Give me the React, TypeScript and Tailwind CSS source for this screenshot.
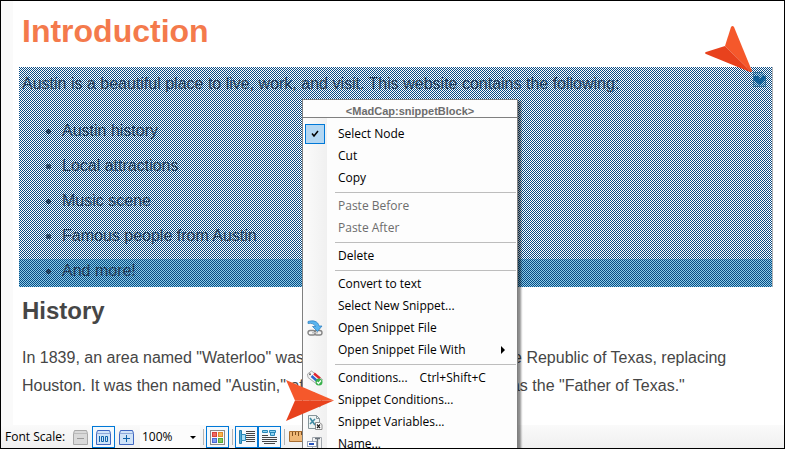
import React from "react";

const TOPICS = ["Austin history", "Local attractions", "Music scene", "Famous people from Austin", "And more!"];

function OpenLinkIcon() {
  return (
    <svg width="16" height="16" viewBox="0 0 16 16" fill="none" aria-hidden="true">
      <rect x="1" y="10.5" width="7.500" height="4.500" rx="2.200" stroke="#858585" strokeWidth="1.400" />
      <rect x="7.500" y="10.500" width="7.500" height="4.500" rx="2.200" stroke="#858585" strokeWidth="1.400" />
      <path d="M5 12.700h6" stroke="#c0c0c0" strokeWidth="1.400" />
      <path d="M1 1.500C6 0 11 1 12 6h3L10.500 11.500 5.500 6.500H8.500C7.500 4 4.500 2.800 1 3.500Z" fill="#58b4ee" stroke="#2679bd" strokeWidth=".7" />
    </svg>
  );
}

function ConditionsIcon() {
  return (
    <svg width="16" height="16" viewBox="0 0 16 16" aria-hidden="true">
      <path d="M.500 4 4.500 1l11 8.500-4.500 5.500L1 7.500Z" fill="#f5f5f5" stroke="#999" strokeWidth=".8" />
      <path d="M7 3.500 13 8.500" stroke="#e02632" strokeWidth="2.400" />
      <path d="M4.500 6 9.500 10.500" stroke="#2b67cd" strokeWidth="2.400" />
      <circle cx="3" cy="4.200" r="1" fill="#666" />
      <circle cx="12" cy="12" r="3.500" fill="#38b24b" />
      <path d="m10 12 1.500 1.500 2.500-3" fill="none" stroke="#fff" strokeWidth="1.200" />
    </svg>
  );
}

function SnippetTagIcon() {
  return (
    <svg width="16" height="16" viewBox="0 0 16 16" aria-hidden="true">
      <path d="M1 4 4 1h4l7 7-5 6L1 7Z" fill="#f2f2f2" stroke="#9a9a9a" />
      <path d="m8 13 5 2 1-4" fill="none" stroke="#999" />
    </svg>
  );
}

function VariablesIcon() {
  return (
    <svg width="16" height="16" viewBox="0 0 16 16" aria-hidden="true">
      <path d="M1.500 1.500h8l3 3v10h-11Z" fill="#eef4f4" stroke="#86959a" />
      <path d="M9.500 1.500v3h3" fill="none" stroke="#86959a" />
      <path d="m3 4 5 7M8 5 3 10" stroke="#428ba3" strokeWidth="1.600" />
      <path d="M8.500 8.500h4l2.500 2v5H8.500Z" fill="#fff" stroke="#8b8b8b" />
      <path d="m10 10.500 3 3.500m0-3.500L10 14" stroke="#222" strokeWidth="1.200" />
    </svg>
  );
}

function NameIcon() {
  return (
    <svg width="16" height="16" viewBox="0 0 16 16" aria-hidden="true">
      <path d="M5.500 1.500h9v13h-9Z" fill="#f4f4f4" stroke="#a2a8ae" />
      <rect x=".5" y="5.500" width="9" height="5" fill="#fff" stroke="#9aa5b8" />
      <rect x="2" y="7" width="5" height="2" fill="#2854bd" />
      <path d="M8 2.500h5M10.500 2.500v11M8 13.500h5" stroke="#69727b" strokeWidth="1.300" />
    </svg>
  );
}

type Entry = { label: string; icon?: React.ReactNode; disabled?: boolean; checked?: boolean; submenu?: boolean; keys?: string };

const GROUPS: Entry[][] = [
  [{ label: "Select Node", checked: true }, { label: "Cut" }, { label: "Copy" }],
  [{ label: "Paste Before", disabled: true }, { label: "Paste After", disabled: true }],
  [{ label: "Delete" }],
  [
    { label: "Convert to text" },
    { label: "Select New Snippet..." },
    { label: "Open Snippet File", icon: <OpenLinkIcon /> },
    { label: "Open Snippet File With", submenu: true },
  ],
  [
    { label: "Conditions...", icon: <ConditionsIcon />, keys: "Ctrl+Shift+C" },
    { label: "Snippet Conditions...", icon: <SnippetTagIcon /> },
    { label: "Snippet Variables...", icon: <VariablesIcon /> },
    { label: "Name...", icon: <NameIcon /> },
  ],
];

function MenuRow({ entry }: { entry: Entry }) {
  return (
    <button
      type="button"
      role={entry.checked ? "menuitemcheckbox" : "menuitem"}
      aria-checked={entry.checked}
      disabled={entry.disabled}
      className="flex h-[22px] w-full items-center text-left text-black disabled:text-[#6d6d6d]"
    >
      <span className="flex w-6 shrink-0 justify-center">
        {entry.checked ? (
          <span className="flex h-5 w-5 items-center justify-center border border-[#0078d7] bg-[#b3d7f3]">
            <svg width="8" height="8" viewBox="0 0 8 8" aria-hidden="true">
              <path d="m1 3.500 2 2.500L7 1" fill="none" stroke="#000" strokeWidth="1.500" />
            </svg>
          </span>
        ) : (
          entry.icon
        )}
      </span>
      <span className="pl-[11px]">{entry.label}</span>
      {entry.keys && <span className="pl-3">{entry.keys}</span>}
      {entry.submenu && (
        <svg className="mr-3 ml-auto" width="4" height="8" viewBox="0 0 4 8" aria-hidden="true">
          <path d="M0 0v8l4-4Z" />
        </svg>
      )}
    </button>
  );
}

function ContextMenu() {
  return (
    <div
      role="menu"
      aria-label="Snippet block"
      className="absolute top-[98px] left-[301px] w-[216px] border border-[#808080] bg-[#fdfdfd] font-['Open_Sans',sans-serif] text-[12px] leading-4 shadow-[3px_2px_2px_rgba(0,0,0,0.45)]"
    >
      <div className="flex h-[18px] items-center justify-center border-b border-[#808080] pt-1 font-['Liberation_Sans',sans-serif] text-[11px] font-bold text-[#6d6d6d]">
        &lt;MadCap:snippetBlock&gt;
      </div>
      <div className="bg-linear-to-r from-[#fbfbfb] from-0% via-[#f0f0f0] via-[24px] to-[#fdfdfd] to-[24px] pt-[5px]">
        {GROUPS.map((group, i) => (
          <div key={i} role="group" className="flow-root">
            {i > 0 && <div role="separator" className="mt-[3px] mr-px mb-[2px] ml-8 border-t border-[#bdbdbd]" />}
            {group.map((entry) => (
              <MenuRow key={entry.label} entry={entry} />
            ))}
          </div>
        ))}
      </div>
    </div>
  );
}

function ToolButton({ label, active, children }: { label: string; active?: boolean; children: React.ReactNode }) {
  return (
    <button
      type="button"
      aria-label={label}
      aria-pressed={active}
      className="flex h-[22px] w-[23px] shrink-0 items-center justify-center border border-transparent aria-pressed:border-[#0078d7] aria-pressed:bg-[#f4f9fd]"
    >
      {children}
    </button>
  );
}

function ScaleIcon({ kind }: { kind: "minus" | "full" | "plus" }) {
  const off = kind === "minus";
  return (
    <svg width="15" height="15" viewBox="0 0 15 15" fill="none" aria-hidden="true">
      <path d="M.5 3.500 1.500.5h12l1 3v11H.5Z" fill={off ? "#d9d9d9" : "#cfe3f8"} stroke={off ? "#a8a8a8" : "#3f66c0"} />
      <path d="M1 3.500h13" stroke={off ? "#bbb" : "#8fa9da"} />
      {kind !== "full" && <path d="M4 8.500h7" stroke={off ? "#999" : "#0d62a8"} />}
      {kind === "plus" && <path d="M7.500 5v7" stroke="#0d62a8" />}
      {kind === "full" && <path d="M3.500 6v6M5.500 6.500h2v5h-2ZM9.500 6.500h2v5h-2Z" stroke="#0d62a8" />}
    </svg>
  );
}

function Divider() {
  return <span className="mr-[2px] ml-[3px] h-4 w-px shrink-0 self-center bg-[#b5b5b5]" />;
}

function Toolbar() {
  return (
    <div className="flex h-[23px] shrink-0 items-end overflow-hidden bg-linear-to-b from-[#fafafa] to-[#f0f0f0] font-['Open_Sans',sans-serif] text-[12px] leading-[22px] text-black">
      <label htmlFor="scale" className="w-[68px] shrink-0 pl-1 whitespace-nowrap">
        Font Scale:
      </label>
      <ToolButton label="Decrease font scale"><ScaleIcon kind="minus" /></ToolButton>
      <ToolButton label="Reset font scale" active><ScaleIcon kind="full" /></ToolButton>
      <ToolButton label="Increase font scale"><ScaleIcon kind="plus" /></ToolButton>
      <span className="relative ml-[2px] flex h-[22px] w-[60px] shrink-0 items-center">
        <select id="scale" className="h-full w-full appearance-none bg-[#fcfcfc] pl-[2px]" defaultValue="100%">
          <option>100%</option>
        </select>
        <svg className="pointer-events-none absolute right-1" width="6" height="3" viewBox="0 0 6 3" aria-hidden="true">
          <path d="M0 0h6L3 3Z" />
        </svg>
      </span>
      <Divider />
      <ToolButton label="Show tags" active>
        <svg width="15" height="15" viewBox="0 0 15 15" aria-hidden="true">
          <rect x=".5" y=".5" width="14" height="14" fill="#f8f8f8" stroke="#8a8a8a" />
          <rect x="2.500" y="2.500" width="4" height="4" fill="#ef6a60" stroke="#d8423c" />
          <rect x="8.500" y="2.500" width="4" height="4" fill="#f7b64c" stroke="#e08a2a" />
          <rect x="2.500" y="8.500" width="4" height="4" fill="#7c9cf1" stroke="#4a6ad4" />
          <rect x="8.500" y="8.500" width="4" height="4" fill="#83c95c" stroke="#55a835" />
        </svg>
      </ToolButton>
      <Divider />
      <ToolButton label="Show block bars" active>
        <svg width="17" height="16" viewBox="0 0 17 16" aria-hidden="true">
          <path d="M1.500 1.500h2v13h-2Z" fill="#4eabd9" stroke="#237ead" />
          <path d="M3.500 5.500h4v6h-4Z" fill="#a9dff5" stroke="#2788b9" />
          <path d="M8 2.500h9M8 4.500h9M8 6.500h9M8 8.500h9M8 10.500h9M8 12.500h9" stroke="#454545" />
        </svg>
      </ToolButton>
      <ToolButton label="Show span bars" active>
        <svg width="17" height="16" viewBox="0 0 17 16" aria-hidden="true">
          <path d="M1.500 1.500h5v2h-5ZM8.500 1.500h6v2h-6ZM9.500 3.500h4v3h-4Z" fill="#8ed3f0" stroke="#2788b9" />
          <path d="M1 6.500h6M1 8.500h15M1 10.500h15M1 12.500h15M3 14.500h11" stroke="#454545" />
        </svg>
      </ToolButton>
      <Divider />
      <ToolButton label="Show rulers">
        <svg width="20" height="12" viewBox="0 0 20 12" aria-hidden="true">
          <path d="M.5.500h19v10H.5Z" fill="#efb877" stroke="#a96e31" />
          <path d="M3.500 1v4M6.500 1v3M9.500 1v4M12.500 1v3M15.500 1v4" stroke="#805020" />
        </svg>
      </ToolButton>
    </div>
  );
}

function SelectionMesh() {
  return (
    <svg className="pointer-events-none absolute inset-0 h-full w-full" shapeRendering="crispEdges" aria-hidden="true">
      <defs>
        <pattern id="mesh" width="2" height="2" patternUnits="userSpaceOnUse">
          <rect width="1" height="1" fill="#084a83" />
          <rect x="1" y="1" width="1" height="1" fill="#084a83" />
        </pattern>
      </defs>
      <rect width="100%" height="100%" fill="url(#mesh)" />
    </svg>
  );
}

function SnippetBlock() {
  return (
    <section className="relative mr-[11px] ml-[6px] h-[220px] border-r border-[#b4b4b4] bg-linear-to-t from-[#8ccbe6] from-[28px] to-white to-[28px] pt-px pl-[3px] text-[#3a2e2e]">
      <p className="leading-8">
        Austin is a beautiful place to live, work, and visit. This website contains the following:
      </p>
      <ul className="list-disc pt-[13px] pl-10 leading-[35px]">
        {TOPICS.map((topic) => (
          <li key={topic}>{topic}</li>
        ))}
      </ul>
      <svg className="absolute top-[5px] right-[5px]" width="14" height="15" viewBox="0 0 14 15" aria-hidden="true">
        <path d="M.5.500h9l3 3v11H.5Z" fill="#b5dcee" stroke="#5d93aa" />
        <path d="M1 4h4l2 3 3-4 3 3-6 7-6-5Z" fill="#1d77ad" />
      </svg>
      <SelectionMesh />
    </section>
  );
}

export default function App() {
  return (
    <main className="relative flex h-screen flex-col overflow-hidden border border-black bg-[#fafafa] font-['Liberation_Sans',Arial,sans-serif] text-base text-[#464646]">
      <article className="ml-3 min-h-0 flex-1 overflow-hidden bg-white">
        <h1 className="pt-3 pb-[18px] pl-[9px] text-[32px] leading-9 font-bold text-[#f47a4c]">Introduction</h1>
        <SnippetBlock />
        <h2 className="pt-[10px] pl-[9px] text-2xl leading-7 font-bold">History</h2>
        <p className="pt-[19px] pr-[30px] pl-[9px] leading-7">
          In 1839, an area named "Waterloo" was chosen to be the capital of the Republic of Texas, replacing Houston. It
          was then named "Austin," after Stephen F. Austin, known as the "Father of Texas."
        </p>
      </article>
      <Toolbar />
      <ContextMenu />
      <svg className="absolute top-6 left-[703px]" width="48" height="48" viewBox="0 0 48 48" aria-hidden="true">
        <path d="M27 2Q28.500 0 30 2L48 46 47.500 47 21 21Z" fill="#f5582b" />
        <path d="M2 29Q0 28 2 27L21 21 47.500 47 46 47Z" fill="#e8421d" />
      </svg>
      <svg className="absolute top-[379px] left-[284px]" width="50" height="42" viewBox="0 0 50 42" aria-hidden="true">
        <path d="M1 0 49 20.500H10Z" fill="#f5582b" />
        <path d="M1 41 49 20.500H10Z" fill="#e8421d" />
      </svg>
    </main>
  );
}
